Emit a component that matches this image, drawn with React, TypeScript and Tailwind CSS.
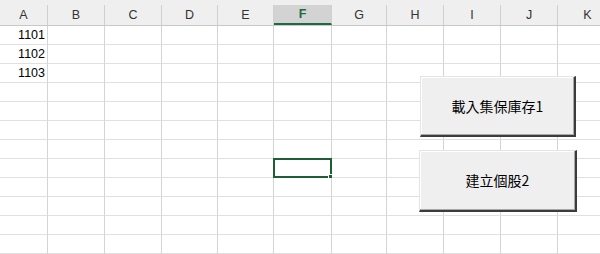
const columns = [
  { label: 'A', width: 48 },
  { label: 'B', width: 57 },
  { label: 'C', width: 57 },
  { label: 'D', width: 56 },
  { label: 'E', width: 56 },
  { label: 'F', width: 58 },
  { label: 'G', width: 55 },
  { label: 'H', width: 57 },
  { label: 'I', width: 57 },
  { label: 'J', width: 57 },
  { label: 'K', width: 60 },
];

const data: Record<string, string> = {
  'A1': '1101',
  'A2': '1102',
  'A3': '1103',
};

const rowCount = 13;
const activeCol = 'F';
const activeRow = 8;

const gridCols = columns.map((c) => `${c.width}px`).join(' ');

const SheetButton = ({ label, className }: { label: string; className: string }) => (
  <div
    className={`absolute flex items-center justify-center bg-[#efefef] border-t border-l border-[#e4e4e4] border-r-2 border-b-2 border-r-[#3c3c3c] border-b-[#3c3c3c] shadow-[inset_-1px_-1px_0_#a8a8a8,inset_1px_1px_0_#ffffff] text-[14px] text-black ${className}`}
    style={{ fontFamily: '"Noto Sans CJK TC", "Liberation Sans", sans-serif' }}
  >
    {label}
  </div>
);

export default function App() {
  return (
    <div
      className="relative w-[600px] h-[254px] overflow-hidden bg-white"
      style={{ fontFamily: '"Liberation Sans", Arial, sans-serif' }}
    >
      {/* column headers */}
      <div className="pt-[5px] bg-[#efefef] border-b border-[#c8c8c8]">
        <div className="grid" style={{ gridTemplateColumns: gridCols }}>
          {columns.map((c) => {
            const active = c.label === activeCol;
            return (
              <div
                key={c.label}
                className={`h-[20px] flex items-center justify-center text-[12.5px] border-r border-[#d0d0d0] ${
                  active
                    ? 'bg-[#d3d3d3] text-[#1e6b41] font-bold border-b-2 border-b-[#1e6b41]'
                    : 'text-[#333]'
                }`}
              >
                {c.label}
              </div>
            );
          })}
        </div>
      </div>

      {/* cells */}
      {Array.from({ length: rowCount }, (_, r) => (
        <div key={r} className="grid" style={{ gridTemplateColumns: gridCols }}>
          {columns.map((c) => {
            const key = `${c.label}${r + 1}`;
            const active = c.label === activeCol && r + 1 === activeRow;
            return (
              <div
                key={key}
                className="relative h-[19px] flex items-end justify-end pr-[2px] pb-[1px] text-[12.5px] leading-[16px] text-black border-r border-r-[#d4d4d4] border-b border-b-[#e0e0e0]"
              >
                {data[key]}
                {active && (
                  <div className="absolute -left-[1px] -top-[1px] -right-[1px] -bottom-[1px] border-2 border-[#1e5e36]">
                    <div className="absolute -right-[3px] -bottom-[3px] w-[5px] h-[5px] bg-[#1e5e36] border border-white" />
                  </div>
                )}
              </div>
            );
          })}
        </div>
      ))}

      <SheetButton label="載入集保庫存1" className="left-[420px] top-[76px] w-[156px] h-[61px]" />
      <SheetButton label="建立個股2" className="left-[419px] top-[150px] w-[158px] h-[62px]" />
    </div>
  );
}
